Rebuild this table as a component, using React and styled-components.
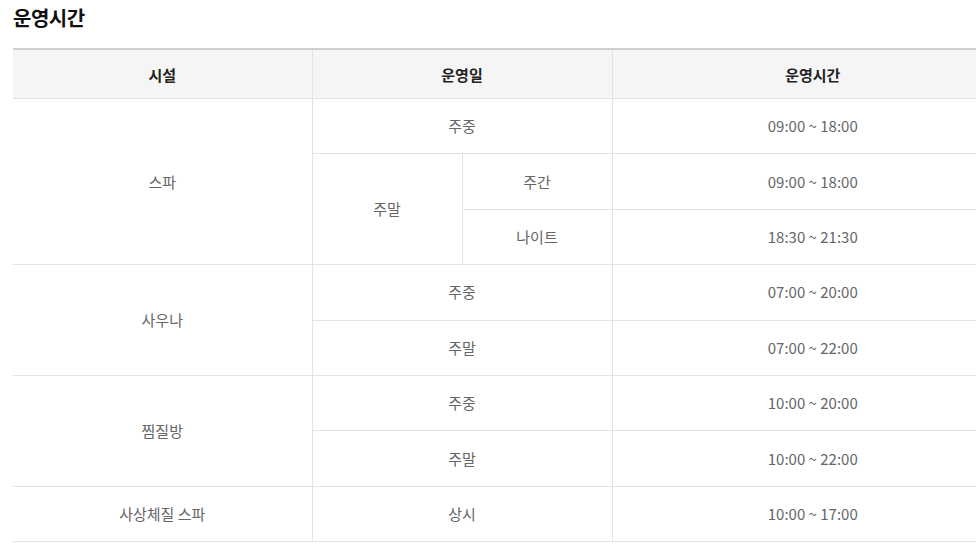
import React from "react";
import styled, { createGlobalStyle } from "styled-components";

const Global = createGlobalStyle`
  html, body {
    margin: 0;
    padding: 0;
    background: #fff;
    overflow: hidden;
  }
  body {
    font-family: "Noto Sans CJK KR", "Noto Sans", sans-serif;
  }
`;

const Section = styled.section`
  padding: 4px 0 0 13px;
  width: 1000px;
`;

const Title = styled.h3`
  margin: 0 0 16px;
  font-size: 20px;
  line-height: 28px;
  font-weight: 700;
  color: #111;
  letter-spacing: -0.5px;
`;

const Table = styled.table`
  width: 1000px;
  border-collapse: collapse;
  table-layout: fixed;
  border-top: 2px solid #cfcfcf;
`;

const Col = styled.col`
  width: ${p => p.$w}px;
`;

const Th = styled.th`
  height: 48px;
  padding: 0;
  background: #f5f5f5;
  border-bottom: 1px solid #e3e3e3;
  border-left: 1px solid #e3e3e3;
  font-size: 15px;
  font-weight: 700;
  color: #222;
  text-align: center;
  &:first-child { border-left: 0; }
`;

const Td = styled.td`
  height: 54.4px;
  padding: 0;
  border-bottom: 1px solid #e3e3e3;
  border-left: ${p => (p.$first ? "0" : "1px solid #e3e3e3")};
  font-size: 15px;
  line-height: 20px;
  color: #666;
  text-align: center;
  vertical-align: middle;
`;

const rows = [
  [
    { t: "스파", rs: 3, first: true },
    { t: "주중", cs: 2 },
    { t: "09:00 ~ 18:00" },
  ],
  [{ t: "주말", rs: 2 }, { t: "주간" }, { t: "09:00 ~ 18:00" }],
  [{ t: "나이트" }, { t: "18:30 ~ 21:30" }],
  [{ t: "사우나", rs: 2, first: true }, { t: "주중", cs: 2 }, { t: "07:00 ~ 20:00" }],
  [{ t: "주말", cs: 2 }, { t: "07:00 ~ 22:00" }],
  [{ t: "찜질방", rs: 2, first: true }, { t: "주중", cs: 2 }, { t: "10:00 ~ 20:00" }],
  [{ t: "주말", cs: 2 }, { t: "10:00 ~ 22:00" }],
  [{ t: "사상체질 스파", first: true }, { t: "상시", cs: 2 }, { t: "10:00 ~ 17:00" }],
];

export default function App() {
  return (
    <Section>
      <Global />
      <Title>운영시간</Title>
      <Table>
        <colgroup>
          <Col $w={299} />
          <Col $w={150} />
          <Col $w={150} />
          <Col $w={401} />
        </colgroup>
        <thead>
          <tr>
            <Th>시설</Th>
            <Th colSpan={2}>운영일</Th>
            <Th>운영시간</Th>
          </tr>
        </thead>
        <tbody>
          {rows.map((r, i) => (
            <tr key={i}>
              {r.map((c, j) => (
                <Td key={j} rowSpan={c.rs} colSpan={c.cs} $first={c.first}>
                  {c.t}
                </Td>
              ))}
            </tr>
          ))}
        </tbody>
      </Table>
    </Section>
  );
}
